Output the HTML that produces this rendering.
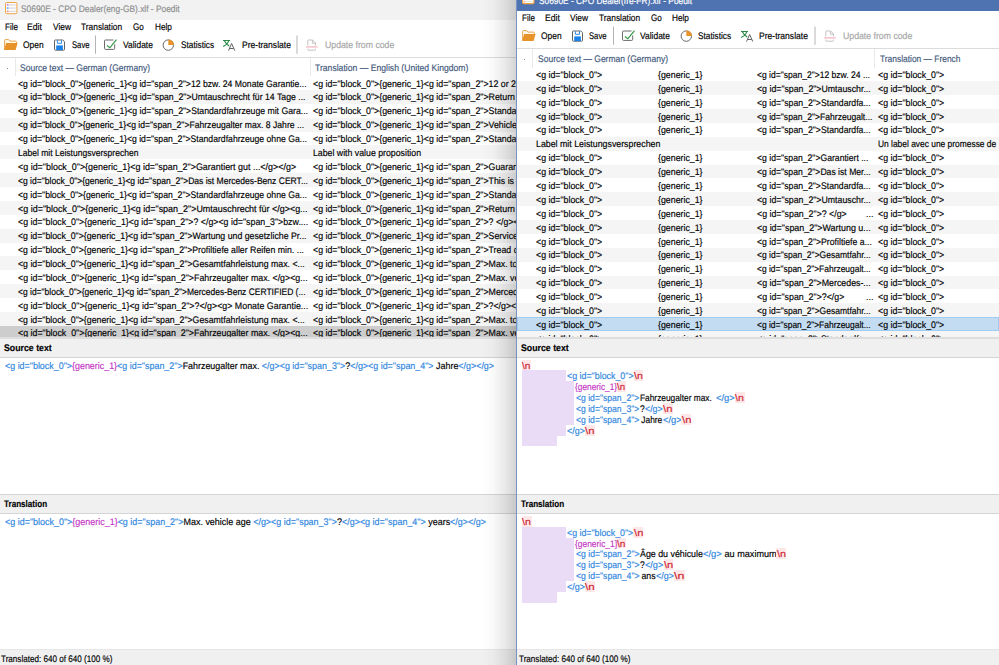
<!DOCTYPE html>
<html><head><meta charset="utf-8"><title>Poedit</title>
<style>
html,body{margin:0;padding:0}
body{width:999px;height:665px;overflow:hidden;position:relative;background:#fff;font-family:"Liberation Sans",sans-serif;font-size:9.5px;color:#000;text-rendering:geometricPrecision}
.win{position:absolute;top:0;height:665px;overflow:hidden;background:#fff}
#lw{left:0;width:517px}
#rw{left:517px;width:482px;border-left:1px solid #7693c6;margin-left:-1px}
#shadow{position:absolute;left:482px;top:0;width:34.5px;height:665px;background:linear-gradient(to right,rgba(0,0,0,0) 0%,rgba(0,0,0,.025) 32%,rgba(0,0,0,.085) 66%,rgba(0,0,0,.175) 100%)}
.titlebar{position:absolute;left:0;right:0}
.t{position:absolute;white-space:pre;line-height:12px;transform-origin:0 50%;display:block;-webkit-text-stroke:.16px currentColor}
.ico{position:absolute;overflow:visible}
.ttl{color:#8e8e8e}
.ttlw{color:#fff}
.dis{color:#a6a6a6}
.hdr{color:#3f587c}
.b{font-weight:bold}
.hline{position:absolute;left:0;right:0;height:1px;background:#dcdcdc}
.vsep{position:absolute;width:1px;background:#e9e9e9}
.dot{position:absolute;width:1px;height:1px;background:#7f93ad}
.list{position:absolute;left:0;right:0;overflow:hidden}
.row{position:absolute;left:0;right:0;height:13.9px}
.row.alt{background:#f5f5f5}
.row.selg{background:#cdcdcd}
.row.selb{background:#c3dcf2;box-shadow:inset 0 0 0 1px #9fcbf1}
.phdr{position:absolute;left:0;right:0;background:#f0f0f0}
.pline{position:absolute;left:0;right:0;height:1px;background:#d4d4d4}
.status{position:absolute;left:0;right:0;height:16px;background:#f0f0f0;border-top:1px solid #e6e6e6}
.tg{color:#2f86e0}
.ph{color:#c436c6}
.nlt{color:#cf2535}
.nlbg{position:absolute;background:#fde7e7}
.ws{position:absolute;background:#eadcf6}
</style></head>
<body>
<div id="lw" class="win">
<div class="titlebar" style="top:0;height:19.5px;background:#f2f2f2"></div>
<svg class="ico" style="left:4.6px;top:2px" width="14" height="14" viewBox="0 0 14 14">
<rect x="0.5" y="0.5" width="11.4" height="11.2" rx="1" fill="#fcfcfc" stroke="#f0a545" stroke-width="1"/>
<path d="M4.2 2.9h6.6M4.2 6.1h6.6M4.2 9.3h6.6" stroke="#dcdcdc" stroke-width="1.3"/>
<rect x="1.9" y="2.1" width="1.7" height="1.6" fill="#c77be0"/><rect x="1.9" y="5.3" width="1.7" height="1.6" fill="#4aa8f0"/><rect x="1.9" y="8.5" width="1.7" height="1.6" fill="#f08a7a"/>
</svg>
<span class="t ttl" style="left:21px;top:4.20px;transform:scaleX(0.8814)">S0690E - CPO Dealer(eng-GB).xlf - Poedit</span>
<span class="t " style="left:4.7px;top:22.25px;transform:scaleX(0.8490)">File</span>
<span class="t " style="left:27.4px;top:22.25px;transform:scaleX(0.9099)">Edit</span>
<span class="t " style="left:52.6px;top:22.25px;transform:scaleX(0.8814)">View</span>
<span class="t " style="left:81.4px;top:22.25px;transform:scaleX(0.8809)">Translation</span>
<span class="t " style="left:133px;top:22.25px;transform:scaleX(0.8512)">Go</span>
<span class="t " style="left:154.6px;top:22.25px;transform:scaleX(0.8646)">Help</span>
<svg class="ico" style="left:0px;top:34px" width="400" height="22" viewBox="0 34 400 22">
<path d="M4.6 49.6V40.4q0-.8.8-.8h3.3l1.3 1.5h5.6q.8 0 .8.8v1.2" fill="#fff8ee" stroke="#eba54a" stroke-width="1"/>
<path d="M4.2 49.9l1.9-7h11.5l-2 7z" fill="#e8932a"/>
<path d="M54.5 40.8q0-.8.8-.8h7.5l1.7 1.7v7.7q0 .8-.8.8h-8.4q-.8 0-.8-.8z" fill="#fff" stroke="#646464" stroke-width="1"/>
<path d="M57.4 40.3v3h4.1v-3" fill="none" stroke="#2a8ae8" stroke-width="1"/>
<path d="M56.2 45.4h6.7v4.7h-6.7z" fill="#1a82e8"/>
<path d="M95.5 35.5v18.3" stroke="#b4b4b4" stroke-width="1"/>
<path d="M113.5 40h-8q-1 0-1 1v7.4q0 1 1 1h8.2q1 0 1-1v-4" fill="none" stroke="#6a6a6a" stroke-width="1"/>
<path d="M106.9 45.4l3 2.3 6.6-8" fill="none" stroke="#3a9b4c" stroke-width="1.2"/>
<circle cx="168.3" cy="45.1" r="5.2" fill="#fff" stroke="#6a6a6a" stroke-width="1"/>
<path d="M168.3 45.1v-5.7a5.7 5.7 0 0 1 5.7 5.7z" fill="#e8932a"/>
<path d="M223 40.5h7M224.4 40.8q1.2 3 4.8 5.2M228.7 40.8q-1.2 3.6-5.6 5.7" fill="none" stroke="#2a8a46" stroke-width="1.1"/>
<path d="M228.5 50.6l3.1-7.1 3.2 7.1M229.6 48.5h4.1" fill="none" stroke="#5c5c5c" stroke-width=".95"/>
<path d="M297 35.5v18.3" stroke="#b4b4b4" stroke-width="1"/>
<path d="M307.8 45.4v-4.6q0-.8.8-.8h4l2.9 2.9v2.5M312.4 40.2v3h3M307.8 48.6v.8q0 .8.8.8h6.1q.8 0 .8-.8v-.8" fill="none" stroke="#c2c2c2" stroke-width="1"/>
<path d="M306.1 46.9h11.6" stroke="#f4b6c2" stroke-width="1.3"/>
</svg>
<span class="t " style="left:23px;top:39.70px;transform:scaleX(0.8860)">Open</span>
<span class="t " style="left:71.7px;top:39.70px;transform:scaleX(0.8081)">Save</span>
<span class="t " style="left:122.9px;top:39.70px;transform:scaleX(0.8888)">Validate</span>
<span class="t " style="left:180.7px;top:39.70px;transform:scaleX(0.8707)">Statistics</span>
<span class="t " style="left:241.7px;top:39.70px;transform:scaleX(0.8991)">Pre-translate</span>
<span class="t dis" style="left:325px;top:39.70px;transform:scaleX(0.9177)">Update from code</span>
<div class="hline" style="top:57px"></div>
<div class="vsep" style="left:14.5px;top:58px;height:18px"></div>
<div class="vsep" style="left:309.5px;top:58px;height:18px"></div>
<div class="dot" style="left:6.5px;top:67.5px"></div>
<span class="t hdr" style="left:20px;top:62.60px;transform:scaleX(0.8954)">Source text — German (Germany)</span>
<span class="t hdr" style="left:315.3px;top:62.60px;transform:scaleX(0.9069)">Translation — English (United Kingdom)</span>
<div class="list" style="top:76px;height:262.00px">
<div class="row" style="top:0.00px"></div>
<span class="t " style="left:18.2px;top:2.60px;transform:scaleX(0.9129)">&lt;g id="block_0"&gt;{generic_1}&lt;g id="span_2"&gt;12 bzw. 24 Monate Garantie...</span>
<span class="t " style="left:313px;top:2.60px;transform:scaleX(0.9270)">&lt;g id="block_0"&gt;{generic_1}&lt;g id="span_2"&gt;12 or 24 months warranty</span>
<div class="row alt" style="top:13.88px"></div>
<span class="t " style="left:18.2px;top:16.48px;transform:scaleX(0.9161)">&lt;g id="block_0"&gt;{generic_1}&lt;g id="span_2"&gt;Umtauschrecht für 14 Tage ...</span>
<span class="t " style="left:313px;top:16.48px;transform:scaleX(0.9270)">&lt;g id="block_0"&gt;{generic_1}&lt;g id="span_2"&gt;Return policy for 14 days</span>
<div class="row" style="top:27.76px"></div>
<span class="t " style="left:18.2px;top:30.36px;transform:scaleX(0.9143)">&lt;g id="block_0"&gt;{generic_1}&lt;g id="span_2"&gt;Standardfahrzeuge mit Gara...</span>
<span class="t " style="left:313px;top:30.36px;transform:scaleX(0.9270)">&lt;g id="block_0"&gt;{generic_1}&lt;g id="span_2"&gt;Standard vehicles with</span>
<div class="row alt" style="top:41.64px"></div>
<span class="t " style="left:18.2px;top:44.24px;transform:scaleX(0.9050)">&lt;g id="block_0"&gt;{generic_1}&lt;g id="span_2"&gt;Fahrzeugalter max. 8 Jahre ...</span>
<span class="t " style="left:313px;top:44.24px;transform:scaleX(0.9270)">&lt;g id="block_0"&gt;{generic_1}&lt;g id="span_2"&gt;Vehicle age max. 8 years</span>
<div class="row" style="top:55.52px"></div>
<span class="t " style="left:18.2px;top:58.12px;transform:scaleX(0.9110)">&lt;g id="block_0"&gt;{generic_1}&lt;g id="span_2"&gt;Standardfahrzeuge ohne Ga...</span>
<span class="t " style="left:313px;top:58.12px;transform:scaleX(0.9270)">&lt;g id="block_0"&gt;{generic_1}&lt;g id="span_2"&gt;Standard vehicles without</span>
<div class="row alt" style="top:69.40px"></div>
<span class="t " style="left:18.2px;top:72.00px;transform:scaleX(0.8976)">Label mit Leistungsversprechen</span>
<span class="t " style="left:313px;top:72.00px;transform:scaleX(0.9211)">Label with value proposition</span>
<div class="row" style="top:83.28px"></div>
<span class="t " style="left:18.2px;top:85.88px;transform:scaleX(0.9393)">&lt;g id="block_0"&gt;{generic_1}&lt;g id="span_2"&gt;Garantiert gut ...&lt;/g&gt;&lt;/g&gt;</span>
<span class="t " style="left:313px;top:85.88px;transform:scaleX(0.9270)">&lt;g id="block_0"&gt;{generic_1}&lt;g id="span_2"&gt;Guaranteed good</span>
<div class="row alt" style="top:97.16px"></div>
<span class="t " style="left:18.2px;top:99.76px;transform:scaleX(0.8984)">&lt;g id="block_0"&gt;{generic_1}&lt;g id="span_2"&gt;Das ist Mercedes-Benz CERT...</span>
<span class="t " style="left:313px;top:99.76px;transform:scaleX(0.9270)">&lt;g id="block_0"&gt;{generic_1}&lt;g id="span_2"&gt;This is Mercedes-Benz</span>
<div class="row" style="top:111.04px"></div>
<span class="t " style="left:18.2px;top:113.64px;transform:scaleX(0.9110)">&lt;g id="block_0"&gt;{generic_1}&lt;g id="span_2"&gt;Standardfahrzeuge ohne Ga...</span>
<span class="t " style="left:313px;top:113.64px;transform:scaleX(0.9270)">&lt;g id="block_0"&gt;{generic_1}&lt;g id="span_2"&gt;Standard vehicles without</span>
<div class="row alt" style="top:124.92px"></div>
<span class="t " style="left:18.2px;top:127.52px;transform:scaleX(0.9420)">&lt;g id="block_0"&gt;{generic_1}&lt;g id="span_2"&gt;Umtauschrecht für &lt;/g&gt;&lt;g...</span>
<span class="t " style="left:313px;top:127.52px;transform:scaleX(0.9270)">&lt;g id="block_0"&gt;{generic_1}&lt;g id="span_2"&gt;Return policy</span>
<div class="row" style="top:138.80px"></div>
<span class="t " style="left:18.2px;top:141.40px;transform:scaleX(0.9267)">&lt;g id="block_0"&gt;{generic_1}&lt;g id="span_2"&gt;? &lt;/g&gt;&lt;g id="span_3"&gt;bzw....</span>
<span class="t " style="left:313px;top:141.40px;transform:scaleX(0.9270)">&lt;g id="block_0"&gt;{generic_1}&lt;g id="span_2"&gt;? &lt;/g&gt;&lt;g id="span_3"&gt;</span>
<div class="row alt" style="top:152.68px"></div>
<span class="t " style="left:18.2px;top:155.28px;transform:scaleX(0.9213)">&lt;g id="block_0"&gt;{generic_1}&lt;g id="span_2"&gt;Wartung und gesetzliche Pr...</span>
<span class="t " style="left:313px;top:155.28px;transform:scaleX(0.9270)">&lt;g id="block_0"&gt;{generic_1}&lt;g id="span_2"&gt;Service and statutory</span>
<div class="row" style="top:166.56px"></div>
<span class="t " style="left:18.2px;top:169.16px;transform:scaleX(0.9201)">&lt;g id="block_0"&gt;{generic_1}&lt;g id="span_2"&gt;Profiltiefe aller Reifen min. ...</span>
<span class="t " style="left:313px;top:169.16px;transform:scaleX(0.9270)">&lt;g id="block_0"&gt;{generic_1}&lt;g id="span_2"&gt;Tread depth of all</span>
<div class="row alt" style="top:180.44px"></div>
<span class="t " style="left:18.2px;top:183.04px;transform:scaleX(0.9219)">&lt;g id="block_0"&gt;{generic_1}&lt;g id="span_2"&gt;Gesamtfahrleistung max. &lt;...</span>
<span class="t " style="left:313px;top:183.04px;transform:scaleX(0.9270)">&lt;g id="block_0"&gt;{generic_1}&lt;g id="span_2"&gt;Max. total mileage</span>
<div class="row" style="top:194.32px"></div>
<span class="t " style="left:18.2px;top:196.92px;transform:scaleX(0.9293)">&lt;g id="block_0"&gt;{generic_1}&lt;g id="span_2"&gt;Fahrzeugalter max. &lt;/g&gt;&lt;g...</span>
<span class="t " style="left:313px;top:196.92px;transform:scaleX(0.9270)">&lt;g id="block_0"&gt;{generic_1}&lt;g id="span_2"&gt;Max. vehicle age</span>
<div class="row alt" style="top:208.20px"></div>
<span class="t " style="left:18.2px;top:210.80px;transform:scaleX(0.8922)">&lt;g id="block_0"&gt;{generic_1}&lt;g id="span_2"&gt;Mercedes-Benz CERTIFIED (...</span>
<span class="t " style="left:313px;top:210.80px;transform:scaleX(0.9270)">&lt;g id="block_0"&gt;{generic_1}&lt;g id="span_2"&gt;Mercedes-Benz CERTIFIED</span>
<div class="row" style="top:222.08px"></div>
<span class="t " style="left:18.2px;top:224.68px;transform:scaleX(0.9319)">&lt;g id="block_0"&gt;{generic_1}&lt;g id="span_2"&gt;?&lt;/g&gt;&lt;g&gt; Monate Garantie...</span>
<span class="t " style="left:313px;top:224.68px;transform:scaleX(0.9270)">&lt;g id="block_0"&gt;{generic_1}&lt;g id="span_2"&gt;?&lt;/g&gt;&lt;g&gt; months</span>
<div class="row alt" style="top:235.96px"></div>
<span class="t " style="left:18.2px;top:238.56px;transform:scaleX(0.9219)">&lt;g id="block_0"&gt;{generic_1}&lt;g id="span_2"&gt;Gesamtfahrleistung max. &lt;...</span>
<span class="t " style="left:313px;top:238.56px;transform:scaleX(0.9270)">&lt;g id="block_0"&gt;{generic_1}&lt;g id="span_2"&gt;Max. total mileage</span>
<div class="row selg" style="top:249.84px"></div>
<span class="t " style="left:18.2px;top:252.44px;transform:scaleX(0.9293)">&lt;g id="block_0"&gt;{generic_1}&lt;g id="span_2"&gt;Fahrzeugalter max. &lt;/g&gt;&lt;g...</span>
<span class="t " style="left:313px;top:252.44px;transform:scaleX(0.9270)">&lt;g id="block_0"&gt;{generic_1}&lt;g id="span_2"&gt;Max. vehicle age</span>
</div>
<div class="pline" style="top:337.3px;height:1.3px;background:#dedede"></div>
<div class="phdr" style="top:338.5px;height:18.2px"></div>
<div class="pline" style="top:356.7px"></div>
<span class="t b" style="left:3.7px;top:342.50px;transform:scaleX(0.9237)">Source text</span>
<div class="pline" style="top:493.9px"></div>
<div class="phdr" style="top:494.9px;height:18.1px"></div>
<div class="pline" style="top:513px"></div>
<span class="t b" style="left:3.8px;top:499.00px;transform:scaleX(0.8523)">Translation</span>
<div class="status" style="top:649px"></div>
<span class="t " style="left:1.3px;top:653.50px;transform:scaleX(0.8528)">Translated: 640 of 640 (100 %)</span>
<span class="t " style="left:5px;top:360.50px;transform:scaleX(0.9378)"><span class="tg">&lt;g id="block_0"&gt;</span><span class="ph">{generic_1}</span><span class="tg">&lt;g id="span_2"&gt;</span>Fahrzeugalter max. <span class="tg">&lt;/g&gt;&lt;g id="span_3"&gt;</span>?<span class="tg">&lt;/g&gt;&lt;g id="span_4"&gt;</span> Jahre<span class="tg">&lt;/g&gt;&lt;/g&gt;</span></span>
<span class="t " style="left:5px;top:516.60px;transform:scaleX(0.9424)"><span class="tg">&lt;g id="block_0"&gt;</span><span class="ph">{generic_1}</span><span class="tg">&lt;g id="span_2"&gt;</span>Max. vehicle age <span class="tg">&lt;/g&gt;&lt;g id="span_3"&gt;</span>?<span class="tg">&lt;/g&gt;&lt;g id="span_4"&gt;</span> years<span class="tg">&lt;/g&gt;&lt;/g&gt;</span></span>
</div>
<div id="shadow"></div>
<div id="rw" class="win">
<div class="titlebar" style="top:0;height:11px;background:#4f72b0"></div>
<div style="position:absolute;left:0;top:0;width:483px;height:11px;overflow:hidden">
<svg class="ico" style="left:4.6px;top:-8px" width="14" height="14" viewBox="0 0 14 14"><rect x="0.6" y="0.6" width="11.4" height="11" rx="1.4" fill="#fdfdfd" stroke="#f0a545" stroke-width="1.2"/><path d="M4.3 9.6h6.5" stroke="#e4e4e4" stroke-width=".9"/><rect x="2.1" y="9" width="1.2" height="1.2" fill="#f08a7a"/></svg>
<span class="t ttlw" style="left:21.5px;top:-4.20px;transform:scaleX(0.8781)">S0690E - CPO Dealer(fre-FR).xlf - Poedit</span>
</div>
<span class="t " style="left:5.2px;top:13.45px;transform:scaleX(0.8490)">File</span>
<span class="t " style="left:27.9px;top:13.45px;transform:scaleX(0.9099)">Edit</span>
<span class="t " style="left:53.1px;top:13.45px;transform:scaleX(0.8814)">View</span>
<span class="t " style="left:81.9px;top:13.45px;transform:scaleX(0.8809)">Translation</span>
<span class="t " style="left:133.5px;top:13.45px;transform:scaleX(0.8512)">Go</span>
<span class="t " style="left:155.1px;top:13.45px;transform:scaleX(0.8646)">Help</span>
<svg class="ico" style="left:0.5px;top:25.4px" width="400" height="22" viewBox="0 34 400 22">
<path d="M4.6 49.6V40.4q0-.8.8-.8h3.3l1.3 1.5h5.6q.8 0 .8.8v1.2" fill="#fff8ee" stroke="#eba54a" stroke-width="1"/>
<path d="M4.2 49.9l1.9-7h11.5l-2 7z" fill="#e8932a"/>
<path d="M54.5 40.8q0-.8.8-.8h7.5l1.7 1.7v7.7q0 .8-.8.8h-8.4q-.8 0-.8-.8z" fill="#fff" stroke="#646464" stroke-width="1"/>
<path d="M57.4 40.3v3h4.1v-3" fill="none" stroke="#2a8ae8" stroke-width="1"/>
<path d="M56.2 45.4h6.7v4.7h-6.7z" fill="#1a82e8"/>
<path d="M95.5 35.5v18.3" stroke="#b4b4b4" stroke-width="1"/>
<path d="M113.5 40h-8q-1 0-1 1v7.4q0 1 1 1h8.2q1 0 1-1v-4" fill="none" stroke="#6a6a6a" stroke-width="1"/>
<path d="M106.9 45.4l3 2.3 6.6-8" fill="none" stroke="#3a9b4c" stroke-width="1.2"/>
<circle cx="168.3" cy="45.1" r="5.2" fill="#fff" stroke="#6a6a6a" stroke-width="1"/>
<path d="M168.3 45.1v-5.7a5.7 5.7 0 0 1 5.7 5.7z" fill="#e8932a"/>
<path d="M223 40.5h7M224.4 40.8q1.2 3 4.8 5.2M228.7 40.8q-1.2 3.6-5.6 5.7" fill="none" stroke="#2a8a46" stroke-width="1.1"/>
<path d="M228.5 50.6l3.1-7.1 3.2 7.1M229.6 48.5h4.1" fill="none" stroke="#5c5c5c" stroke-width=".95"/>
<path d="M297 35.5v18.3" stroke="#b4b4b4" stroke-width="1"/>
<path d="M307.8 45.4v-4.6q0-.8.8-.8h4l2.9 2.9v2.5M312.4 40.2v3h3M307.8 48.6v.8q0 .8.8.8h6.1q.8 0 .8-.8v-.8" fill="none" stroke="#c2c2c2" stroke-width="1"/>
<path d="M306.1 46.9h11.6" stroke="#f4b6c2" stroke-width="1.3"/>
</svg>
<span class="t " style="left:23.5px;top:30.90px;transform:scaleX(0.8860)">Open</span>
<span class="t " style="left:72.2px;top:30.90px;transform:scaleX(0.8081)">Save</span>
<span class="t " style="left:123.4px;top:30.90px;transform:scaleX(0.8888)">Validate</span>
<span class="t " style="left:181.2px;top:30.90px;transform:scaleX(0.8707)">Statistics</span>
<span class="t " style="left:242.2px;top:30.90px;transform:scaleX(0.8991)">Pre-translate</span>
<span class="t dis" style="left:325.5px;top:30.90px;transform:scaleX(0.9177)">Update from code</span>
<div class="hline" style="top:48.2px"></div>
<div class="vsep" style="left:15.3px;top:49px;height:18.5px"></div>
<div class="vsep" style="left:357.3px;top:49px;height:18.5px"></div>
<div class="dot" style="left:7.3px;top:58.6px"></div>
<span class="t hdr" style="left:20.5px;top:53.60px;transform:scaleX(0.8954)">Source text — German (Germany)</span>
<span class="t hdr" style="left:362.5px;top:53.60px;transform:scaleX(0.8846)">Translation — French</span>
<div class="list" style="top:67.35px;height:270.25px">
<div class="row" style="top:0.00px"></div>
<span class="t " style="left:19px;top:2.60px;transform:scaleX(0.9270)">&lt;g id="block_0"&gt;</span>
<span class="t " style="left:140.5px;top:2.60px;transform:scaleX(0.9270)">{generic_1}</span>
<span class="t " style="left:239.6px;top:2.60px;transform:scaleX(0.8978)">&lt;g id="span_2"&gt;12 bzw. 24 ...</span>
<span class="t " style="left:360.5px;top:2.60px;transform:scaleX(0.9270)">&lt;g id="block_0"&gt;</span>
<div class="row alt" style="top:13.88px"></div>
<span class="t " style="left:19px;top:16.48px;transform:scaleX(0.9270)">&lt;g id="block_0"&gt;</span>
<span class="t " style="left:140.5px;top:16.48px;transform:scaleX(0.9270)">{generic_1}</span>
<span class="t " style="left:239.6px;top:16.48px;transform:scaleX(0.9229)">&lt;g id="span_2"&gt;Umtauschr...</span>
<span class="t " style="left:360.5px;top:16.48px;transform:scaleX(0.9270)">&lt;g id="block_0"&gt;</span>
<div class="row" style="top:27.76px"></div>
<span class="t " style="left:19px;top:30.36px;transform:scaleX(0.9270)">&lt;g id="block_0"&gt;</span>
<span class="t " style="left:140.5px;top:30.36px;transform:scaleX(0.9270)">{generic_1}</span>
<span class="t " style="left:239.6px;top:30.36px;transform:scaleX(0.9149)">&lt;g id="span_2"&gt;Standardfa...</span>
<span class="t " style="left:360.5px;top:30.36px;transform:scaleX(0.9270)">&lt;g id="block_0"&gt;</span>
<div class="row alt" style="top:41.64px"></div>
<span class="t " style="left:19px;top:44.24px;transform:scaleX(0.9270)">&lt;g id="block_0"&gt;</span>
<span class="t " style="left:140.5px;top:44.24px;transform:scaleX(0.9270)">{generic_1}</span>
<span class="t " style="left:239.6px;top:44.24px;transform:scaleX(0.9018)">&lt;g id="span_2"&gt;Fahrzeugalt...</span>
<span class="t " style="left:360.5px;top:44.24px;transform:scaleX(0.9270)">&lt;g id="block_0"&gt;</span>
<div class="row" style="top:55.52px"></div>
<span class="t " style="left:19px;top:58.12px;transform:scaleX(0.9270)">&lt;g id="block_0"&gt;</span>
<span class="t " style="left:140.5px;top:58.12px;transform:scaleX(0.9270)">{generic_1}</span>
<span class="t " style="left:239.6px;top:58.12px;transform:scaleX(0.9149)">&lt;g id="span_2"&gt;Standardfa...</span>
<span class="t " style="left:360.5px;top:58.12px;transform:scaleX(0.9270)">&lt;g id="block_0"&gt;</span>
<div class="row alt" style="top:69.40px"></div>
<span class="t " style="left:19px;top:72.00px;transform:scaleX(0.9270)">Label mit Leistungsversprechen</span>
<span class="t " style="left:361.3px;top:72.00px;transform:scaleX(0.8847)">Un label avec une promesse de</span>
<div class="row" style="top:83.28px"></div>
<span class="t " style="left:19px;top:85.88px;transform:scaleX(0.9270)">&lt;g id="block_0"&gt;</span>
<span class="t " style="left:140.5px;top:85.88px;transform:scaleX(0.9270)">{generic_1}</span>
<span class="t " style="left:239.6px;top:85.88px;transform:scaleX(0.9081)">&lt;g id="span_2"&gt;Garantiert ...</span>
<span class="t " style="left:360.5px;top:85.88px;transform:scaleX(0.9270)">&lt;g id="block_0"&gt;</span>
<div class="row alt" style="top:97.16px"></div>
<span class="t " style="left:19px;top:99.76px;transform:scaleX(0.9270)">&lt;g id="block_0"&gt;</span>
<span class="t " style="left:140.5px;top:99.76px;transform:scaleX(0.9270)">{generic_1}</span>
<span class="t " style="left:239.6px;top:99.76px;transform:scaleX(0.9073)">&lt;g id="span_2"&gt;Das ist Mer...</span>
<span class="t " style="left:360.5px;top:99.76px;transform:scaleX(0.9270)">&lt;g id="block_0"&gt;</span>
<div class="row" style="top:111.04px"></div>
<span class="t " style="left:19px;top:113.64px;transform:scaleX(0.9270)">&lt;g id="block_0"&gt;</span>
<span class="t " style="left:140.5px;top:113.64px;transform:scaleX(0.9270)">{generic_1}</span>
<span class="t " style="left:239.6px;top:113.64px;transform:scaleX(0.9149)">&lt;g id="span_2"&gt;Standardfa...</span>
<span class="t " style="left:360.5px;top:113.64px;transform:scaleX(0.9270)">&lt;g id="block_0"&gt;</span>
<div class="row alt" style="top:124.92px"></div>
<span class="t " style="left:19px;top:127.52px;transform:scaleX(0.9270)">&lt;g id="block_0"&gt;</span>
<span class="t " style="left:140.5px;top:127.52px;transform:scaleX(0.9270)">{generic_1}</span>
<span class="t " style="left:239.6px;top:127.52px;transform:scaleX(0.9229)">&lt;g id="span_2"&gt;Umtauschr...</span>
<span class="t " style="left:360.5px;top:127.52px;transform:scaleX(0.9270)">&lt;g id="block_0"&gt;</span>
<div class="row" style="top:138.80px"></div>
<span class="t " style="left:19px;top:141.40px;transform:scaleX(0.9270)">&lt;g id="block_0"&gt;</span>
<span class="t " style="left:140.5px;top:141.40px;transform:scaleX(0.9270)">{generic_1}</span>
<span class="t " style="left:239.6px;top:141.40px;transform:scaleX(0.9270)">&lt;g id="span_2"&gt;? &lt;/g&gt;</span>
<span class="t " style="left:349px;top:141.40px;transform:scaleX(0.9270)">...</span>
<span class="t " style="left:360.5px;top:141.40px;transform:scaleX(0.9270)">&lt;g id="block_0"&gt;</span>
<div class="row alt" style="top:152.68px"></div>
<span class="t " style="left:19px;top:155.28px;transform:scaleX(0.9270)">&lt;g id="block_0"&gt;</span>
<span class="t " style="left:140.5px;top:155.28px;transform:scaleX(0.9270)">{generic_1}</span>
<span class="t " style="left:239.6px;top:155.28px;transform:scaleX(0.9376)">&lt;g id="span_2"&gt;Wartung u...</span>
<span class="t " style="left:360.5px;top:155.28px;transform:scaleX(0.9270)">&lt;g id="block_0"&gt;</span>
<div class="row" style="top:166.56px"></div>
<span class="t " style="left:19px;top:169.16px;transform:scaleX(0.9270)">&lt;g id="block_0"&gt;</span>
<span class="t " style="left:140.5px;top:169.16px;transform:scaleX(0.9270)">{generic_1}</span>
<span class="t " style="left:239.6px;top:169.16px;transform:scaleX(0.9168)">&lt;g id="span_2"&gt;Profiltiefe a...</span>
<span class="t " style="left:360.5px;top:169.16px;transform:scaleX(0.9270)">&lt;g id="block_0"&gt;</span>
<div class="row alt" style="top:180.44px"></div>
<span class="t " style="left:19px;top:183.04px;transform:scaleX(0.9270)">&lt;g id="block_0"&gt;</span>
<span class="t " style="left:140.5px;top:183.04px;transform:scaleX(0.9270)">{generic_1}</span>
<span class="t " style="left:239.6px;top:183.04px;transform:scaleX(0.8959)">&lt;g id="span_2"&gt;Gesamtfahr...</span>
<span class="t " style="left:360.5px;top:183.04px;transform:scaleX(0.9270)">&lt;g id="block_0"&gt;</span>
<div class="row" style="top:194.32px"></div>
<span class="t " style="left:19px;top:196.92px;transform:scaleX(0.9270)">&lt;g id="block_0"&gt;</span>
<span class="t " style="left:140.5px;top:196.92px;transform:scaleX(0.9270)">{generic_1}</span>
<span class="t " style="left:239.6px;top:196.92px;transform:scaleX(0.8885)">&lt;g id="span_2"&gt;Fahrzeugalt...</span>
<span class="t " style="left:360.5px;top:196.92px;transform:scaleX(0.9270)">&lt;g id="block_0"&gt;</span>
<div class="row alt" style="top:208.20px"></div>
<span class="t " style="left:19px;top:210.80px;transform:scaleX(0.9270)">&lt;g id="block_0"&gt;</span>
<span class="t " style="left:140.5px;top:210.80px;transform:scaleX(0.9270)">{generic_1}</span>
<span class="t " style="left:239.6px;top:210.80px;transform:scaleX(0.9269)">&lt;g id="span_2"&gt;Mercedes-...</span>
<span class="t " style="left:360.5px;top:210.80px;transform:scaleX(0.9270)">&lt;g id="block_0"&gt;</span>
<div class="row" style="top:222.08px"></div>
<span class="t " style="left:19px;top:224.68px;transform:scaleX(0.9270)">&lt;g id="block_0"&gt;</span>
<span class="t " style="left:140.5px;top:224.68px;transform:scaleX(0.9270)">{generic_1}</span>
<span class="t " style="left:239.6px;top:224.68px;transform:scaleX(0.9270)">&lt;g id="span_2"&gt;?&lt;/g&gt;</span>
<span class="t " style="left:349px;top:224.68px;transform:scaleX(0.9270)">...</span>
<span class="t " style="left:360.5px;top:224.68px;transform:scaleX(0.9270)">&lt;g id="block_0"&gt;</span>
<div class="row alt" style="top:235.96px"></div>
<span class="t " style="left:19px;top:238.56px;transform:scaleX(0.9270)">&lt;g id="block_0"&gt;</span>
<span class="t " style="left:140.5px;top:238.56px;transform:scaleX(0.9270)">{generic_1}</span>
<span class="t " style="left:239.6px;top:238.56px;transform:scaleX(0.8959)">&lt;g id="span_2"&gt;Gesamtfahr...</span>
<span class="t " style="left:360.5px;top:238.56px;transform:scaleX(0.9270)">&lt;g id="block_0"&gt;</span>
<div class="row selb" style="top:249.84px"></div>
<span class="t " style="left:19px;top:252.44px;transform:scaleX(0.9270)">&lt;g id="block_0"&gt;</span>
<span class="t " style="left:140.5px;top:252.44px;transform:scaleX(0.9270)">{generic_1}</span>
<span class="t " style="left:239.6px;top:252.44px;transform:scaleX(0.8885)">&lt;g id="span_2"&gt;Fahrzeugalt...</span>
<span class="t " style="left:360.5px;top:252.44px;transform:scaleX(0.9270)">&lt;g id="block_0"&gt;</span>
<div class="row alt" style="top:263.72px"></div>
<span class="t " style="left:19px;top:266.32px;transform:scaleX(0.9270)">&lt;g id="block_0"&gt;</span>
<span class="t " style="left:140.5px;top:266.32px;transform:scaleX(0.9270)">{generic_1}</span>
<span class="t " style="left:239.6px;top:266.32px;transform:scaleX(0.9149)">&lt;g id="span_2"&gt;Standardfa...</span>
<span class="t " style="left:360.5px;top:266.32px;transform:scaleX(0.9270)">&lt;g id="block_0"&gt;</span>
</div>
<div class="pline" style="top:337.3px;height:1.3px;background:#dedede"></div>
<div class="phdr" style="top:338.5px;height:18.2px"></div>
<div class="pline" style="top:356.7px"></div>
<span class="t b" style="left:3.7px;top:342.50px;transform:scaleX(0.9237)">Source text</span>
<div class="pline" style="top:493.9px"></div>
<div class="phdr" style="top:494.9px;height:18.1px"></div>
<div class="pline" style="top:513px"></div>
<span class="t b" style="left:3.8px;top:499.00px;transform:scaleX(0.8523)">Translation</span>
<div class="status" style="top:649px"></div>
<span class="t " style="left:2.2px;top:653.50px;transform:scaleX(0.8528)">Translated: 640 of 640 (100 %)</span>
<div class="nlbg" style="left:5px;top:359.60px;width:9px;height:10.85px"></div>
<span class="t nlt" style="left:5.3px;top:360.50px;transform:scaleX(1.0583)">\n</span>
<div class="ws" style="left:5px;top:370.45px;width:44.3px;height:10.90px"></div>
<span class="t tg" style="left:49.9px;top:371.35px;transform:scaleX(0.9321)">&lt;g id="block_0"&gt;</span>
<div class="nlbg" style="left:116.5px;top:370.45px;width:9.5px;height:10.85px"></div>
<span class="t nlt" style="left:116.8px;top:371.35px;transform:scaleX(1.1213)">\n</span>
<div class="ws" style="left:5px;top:381.30px;width:52.4px;height:10.90px"></div>
<span class="t ph" style="left:57.75px;top:382.20px;transform:scaleX(0.8767)">{generic_1}</span>
<div class="nlbg" style="left:99.9px;top:381.30px;width:8.7px;height:10.85px"></div>
<span class="t nlt" style="left:100.2px;top:382.20px;transform:scaleX(1.0205)">\n</span>
<div class="ws" style="left:5px;top:392.15px;width:52.4px;height:10.90px"></div>
<span class="t tg" style="left:59px;top:393.05px;transform:scaleX(0.9052)">&lt;g id="span_2"&gt;</span>
<span class="t " style="left:122.6px;top:393.05px;transform:scaleX(0.8777)">Fahrzeugalter max. </span>
<span class="t tg" style="left:199.25px;top:393.05px;transform:scaleX(0.9852)">&lt;/g&gt;</span>
<div class="nlbg" style="left:218px;top:392.15px;width:9.5px;height:10.85px"></div>
<span class="t nlt" style="left:218.3px;top:393.05px;transform:scaleX(1.1213)">\n</span>
<div class="ws" style="left:5px;top:403.00px;width:52.4px;height:10.90px"></div>
<span class="t tg" style="left:59px;top:403.90px;transform:scaleX(0.9052)">&lt;g id="span_3"&gt;</span>
<span class="t " style="left:123.3px;top:403.90px;transform:scaleX(0.8873)">?</span>
<span class="t tg" style="left:128.3px;top:403.90px;transform:scaleX(0.9300)">&lt;/g&gt;</span>
<div class="nlbg" style="left:146px;top:403.00px;width:10px;height:10.85px"></div>
<span class="t nlt" style="left:146.3px;top:403.90px;transform:scaleX(1.1843)">\n</span>
<div class="ws" style="left:5px;top:413.85px;width:52.4px;height:10.90px"></div>
<span class="t tg" style="left:59px;top:414.75px;transform:scaleX(0.9052)">&lt;g id="span_4"&gt;</span>
<span class="t " style="left:122.25px;top:414.75px;transform:scaleX(0.8805)"> Jahre</span>
<span class="t tg" style="left:145.5px;top:414.75px;transform:scaleX(0.9852)">&lt;/g&gt;</span>
<div class="nlbg" style="left:164.25px;top:413.85px;width:10px;height:10.85px"></div>
<span class="t nlt" style="left:164.55px;top:414.75px;transform:scaleX(1.1843)">\n</span>
<div class="ws" style="left:5px;top:424.70px;width:44.3px;height:10.90px"></div>
<span class="t tg" style="left:49.9px;top:425.60px;transform:scaleX(0.9379)">&lt;/g&gt;</span>
<div class="nlbg" style="left:67.75px;top:424.70px;width:10px;height:10.85px"></div>
<span class="t nlt" style="left:68.05px;top:425.60px;transform:scaleX(1.1843)">\n</span>
<div class="ws" style="left:5px;top:435.55px;width:35px;height:10.90px"></div>
<div class="nlbg" style="left:5px;top:515.90px;width:9.5px;height:10.85px"></div>
<span class="t nlt" style="left:5.3px;top:516.80px;transform:scaleX(1.1213)">\n</span>
<div class="ws" style="left:5px;top:526.75px;width:44.3px;height:10.90px"></div>
<span class="t tg" style="left:49.7px;top:527.65px;transform:scaleX(0.9265)">&lt;g id="block_0"&gt;</span>
<div class="nlbg" style="left:116.3px;top:526.75px;width:10px;height:10.85px"></div>
<span class="t nlt" style="left:116.6px;top:527.65px;transform:scaleX(1.1843)">\n</span>
<div class="ws" style="left:5px;top:537.60px;width:52.4px;height:10.90px"></div>
<span class="t ph" style="left:57.5px;top:538.50px;transform:scaleX(0.8840)">{generic_1}</span>
<div class="nlbg" style="left:100px;top:537.60px;width:9px;height:10.85px"></div>
<span class="t nlt" style="left:100.3px;top:538.50px;transform:scaleX(1.0583)">\n</span>
<div class="ws" style="left:5px;top:548.45px;width:52.4px;height:10.90px"></div>
<span class="t tg" style="left:58.9px;top:549.35px;transform:scaleX(0.9088)">&lt;g id="span_2"&gt;</span>
<span class="t " style="left:122.8px;top:549.35px;transform:scaleX(0.9303)">Âge du véhicule</span>
<span class="t tg" style="left:185.9px;top:549.35px;transform:scaleX(0.9826)">&lt;/g&gt;</span>
<span class="t " style="left:204.6px;top:549.35px;transform:scaleX(0.9594)"> au maximum</span>
<div class="nlbg" style="left:259.3px;top:548.45px;width:9.6px;height:10.85px"></div>
<span class="t nlt" style="left:259.6px;top:549.35px;transform:scaleX(1.1339)">\n</span>
<div class="ws" style="left:5px;top:559.30px;width:52.4px;height:10.90px"></div>
<span class="t tg" style="left:58.9px;top:560.20px;transform:scaleX(0.9088)">&lt;g id="span_3"&gt;</span>
<span class="t " style="left:123.3px;top:560.20px;transform:scaleX(0.8873)">?</span>
<span class="t tg" style="left:128.3px;top:560.20px;transform:scaleX(0.9616)">&lt;/g&gt;</span>
<div class="nlbg" style="left:146.6px;top:559.30px;width:9.9px;height:10.85px"></div>
<span class="t nlt" style="left:146.9px;top:560.20px;transform:scaleX(1.1717)">\n</span>
<div class="ws" style="left:5px;top:570.15px;width:52.4px;height:10.90px"></div>
<span class="t tg" style="left:58.9px;top:571.05px;transform:scaleX(0.9088)">&lt;g id="span_4"&gt;</span>
<span class="t " style="left:122.4px;top:571.05px;transform:scaleX(0.9238)"> ans</span>
<span class="t tg" style="left:139px;top:571.05px;transform:scaleX(0.9458)">&lt;/g&gt;</span>
<div class="nlbg" style="left:157px;top:570.15px;width:11px;height:10.85px"></div>
<span class="t nlt" style="left:157.3px;top:571.05px;transform:scaleX(1.3102)">\n</span>
<div class="ws" style="left:5px;top:581.00px;width:44.3px;height:10.90px"></div>
<span class="t tg" style="left:49.7px;top:581.90px;transform:scaleX(0.9458)">&lt;/g&gt;</span>
<div class="nlbg" style="left:67.7px;top:581.00px;width:10.3px;height:10.85px"></div>
<span class="t nlt" style="left:68px;top:581.90px;transform:scaleX(1.2220)">\n</span>
<div class="ws" style="left:5px;top:591.85px;width:35px;height:10.90px"></div>
</div>
</body></html>
